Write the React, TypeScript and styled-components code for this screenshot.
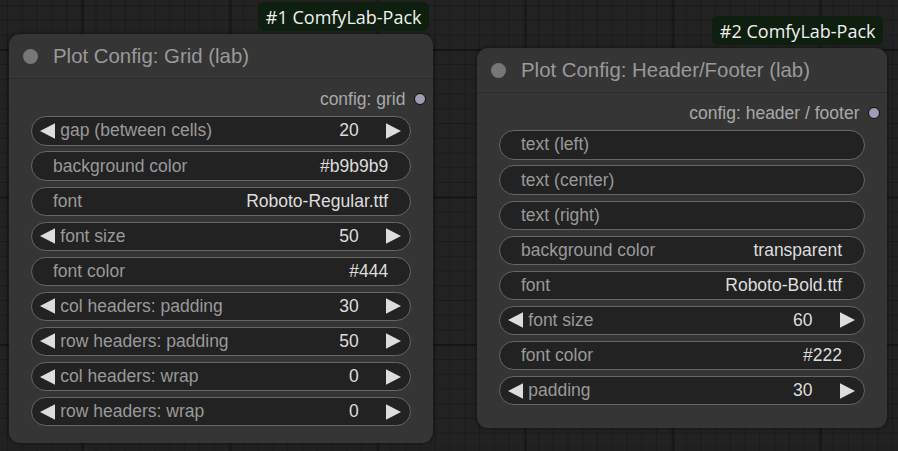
import React from "react";
import styled, { createGlobalStyle } from "styled-components";

const GlobalStyle = createGlobalStyle`
  html, body { margin: 0; padding: 0; background: #222; }
  body { font-family: "Liberation Sans", Arial, sans-serif; }
`;

const Canvas = styled.div`
  position: relative;
  width: 898px;
  height: 451px;
  overflow: hidden;
  background-color: #222;
  background-image:
    linear-gradient(to right, rgba(0, 0, 0, 0.32) 1.5px, transparent 1.5px),
    linear-gradient(to bottom, rgba(0, 0, 0, 0.32) 1.5px, transparent 1.5px),
    linear-gradient(to right, rgba(0, 0, 0, 0.2) 1px, transparent 1px),
    linear-gradient(to bottom, rgba(0, 0, 0, 0.2) 1px, transparent 1px);
  background-size: 147.6px 147.6px, 147.6px 147.6px, 14.76px 14.76px, 14.76px 14.76px;
  background-position: 82px 0, 0 49px, 7px 0, 0 5px;
`;

const NodeBox = styled.div<{ $x: number; $y: number; $w: number; $h: number }>`
  position: absolute;
  left: ${(p) => p.$x}px;
  top: ${(p) => p.$y}px;
  width: ${(p) => p.$w}px;
  height: ${(p) => p.$h}px;
  background: #353535;
  border-radius: 11px;
  box-shadow: 0 0 4px rgba(0, 0, 0, 0.55);
  display: flex;
  flex-direction: column;
  box-sizing: border-box;
`;

const Badge = styled.div`
  position: absolute;
  bottom: calc(100% + 3px);
  right: 4px;
  height: 29px;
  padding: 0 7.5px;
  border-radius: 6px;
  background: #0f1f0f;
  color: #f0f0f0;
  font-family: "Open Sans", "Noto Sans", sans-serif;
  font-size: 18px;
  display: flex;
  align-items: center;
  white-space: nowrap;
`;

const TitleBar = styled.div`
  height: 44px;
  display: flex;
  align-items: center;
  padding-left: 14px;
  border-bottom: 1px solid #2b2b2b;
  flex-shrink: 0;
`;

const TitleDot = styled.span`
  width: 15px;
  height: 15px;
  border-radius: 50%;
  background: #777;
  margin-right: 15px;
  flex-shrink: 0;
`;

const TitleText = styled.span`
  color: #999;
  font-size: 20.4px;
  white-space: nowrap;
`;

const Body = styled.div`
  display: flex;
  flex-direction: column;
  padding-top: 5.5px;
`;

const OutputRow = styled.div`
  height: 29px;
  display: flex;
  align-items: center;
  justify-content: flex-end;
  padding-right: 7px;
  gap: 8px;
  margin-bottom: 2.9px;
`;

const OutputLabel = styled.span`
  color: #a8a8a8;
  font-size: 17.5px;
  white-space: nowrap;
`;

const OutputDot = styled.span`
  width: 10.5px;
  height: 10.5px;
  border-radius: 50%;
  background: #9d9db4;
  border: 1.5px solid #0d0d0d;
  flex-shrink: 0;
`;

const WidgetList = styled.div<{ $right: number }>`
  display: flex;
  flex-direction: column;
  gap: 5.9px;
  padding-left: 21.5px;
  padding-right: ${(p) => p.$right}px;
`;

const Widget = styled.div<{ $numeric: boolean }>`
  height: 29.2px;
  box-sizing: border-box;
  border: 1.2px solid #666;
  border-radius: 15px;
  background: #222;
  display: flex;
  align-items: center;
  padding: ${(p) => (p.$numeric ? "0 8.5px" : "0 21.5px 0 21.5px")};
  font-size: 17.5px;
`;

const Label = styled.span<{ $numeric: boolean }>`
  color: #999;
  flex: 1;
  white-space: nowrap;
  margin-left: ${(p) => (p.$numeric ? "5.3px" : "0")};
`;

const Value = styled.span<{ $numeric: boolean }>`
  color: #ddd;
  white-space: nowrap;
  margin-right: ${(p) => (p.$numeric ? "27.5px" : "0")};
`;

const ArrowSvg = styled.svg`
  width: 15px;
  height: 16px;
  flex-shrink: 0;
  display: block;
`;

const Arrow = ({ dir }: { dir: "left" | "right" }) => (
  <ArrowSvg viewBox="0 0 15 16">
    <polygon
      points={dir === "left" ? "0,8 15,0.2 15,15.8" : "15,8 0,0.2 0,15.8"}
      fill="#ddd"
    />
  </ArrowSvg>
);

type W = { label: string; value: string; numeric?: boolean };

type NodeDef = {
  id: number;
  title: string;
  output: string;
  x: number;
  y: number;
  w: number;
  h: number;
  right: number;
  widgets: W[];
};

const nodes: NodeDef[] = [
  {
    id: 1,
    title: "Plot Config: Grid (lab)",
    output: "config: grid",
    x: 9,
    y: 34,
    w: 424,
    h: 409,
    right: 22.3,
    widgets: [
      { label: "gap (between cells)", value: "20", numeric: true },
      { label: "background color", value: "#b9b9b9" },
      { label: "font", value: "Roboto-Regular.ttf" },
      { label: "font size", value: "50", numeric: true },
      { label: "font color", value: "#444" },
      { label: "col headers: padding", value: "30", numeric: true },
      { label: "row headers: padding", value: "50", numeric: true },
      { label: "col headers: wrap", value: "0", numeric: true },
      { label: "row headers: wrap", value: "0", numeric: true },
    ],
  },
  {
    id: 2,
    title: "Plot Config: Header/Footer (lab)",
    output: "config: header / footer",
    x: 477,
    y: 48,
    w: 410,
    h: 380,
    right: 22.5,
    widgets: [
      { label: "text (left)", value: "" },
      { label: "text (center)", value: "" },
      { label: "text (right)", value: "" },
      { label: "background color", value: "transparent" },
      { label: "font", value: "Roboto-Bold.ttf" },
      { label: "font size", value: "60", numeric: true },
      { label: "font color", value: "#222" },
      { label: "padding", value: "30", numeric: true },
    ],
  },
];

const Node = ({ n }: { n: NodeDef }) => (
  <NodeBox $x={n.x} $y={n.y} $w={n.w} $h={n.h}>
    <Badge>#{n.id} ComfyLab-Pack</Badge>
    <TitleBar>
      <TitleDot />
      <TitleText>{n.title}</TitleText>
    </TitleBar>
    <Body>
      <OutputRow>
        <OutputLabel>{n.output}</OutputLabel>
        <OutputDot />
      </OutputRow>
      <WidgetList $right={n.right}>
        {n.widgets.map((w, i) => {
          const num = !!w.numeric;
          return (
            <Widget key={i} $numeric={num}>
              {num && <Arrow dir="left" />}
              <Label $numeric={num}>{w.label}</Label>
              <Value $numeric={num}>{w.value}</Value>
              {num && <Arrow dir="right" />}
            </Widget>
          );
        })}
      </WidgetList>
    </Body>
  </NodeBox>
);

export default function App() {
  return (
    <>
      <GlobalStyle />
      <Canvas>
        {nodes.map((n) => (
          <Node key={n.id} n={n} />
        ))}
      </Canvas>
    </>
  );
}
